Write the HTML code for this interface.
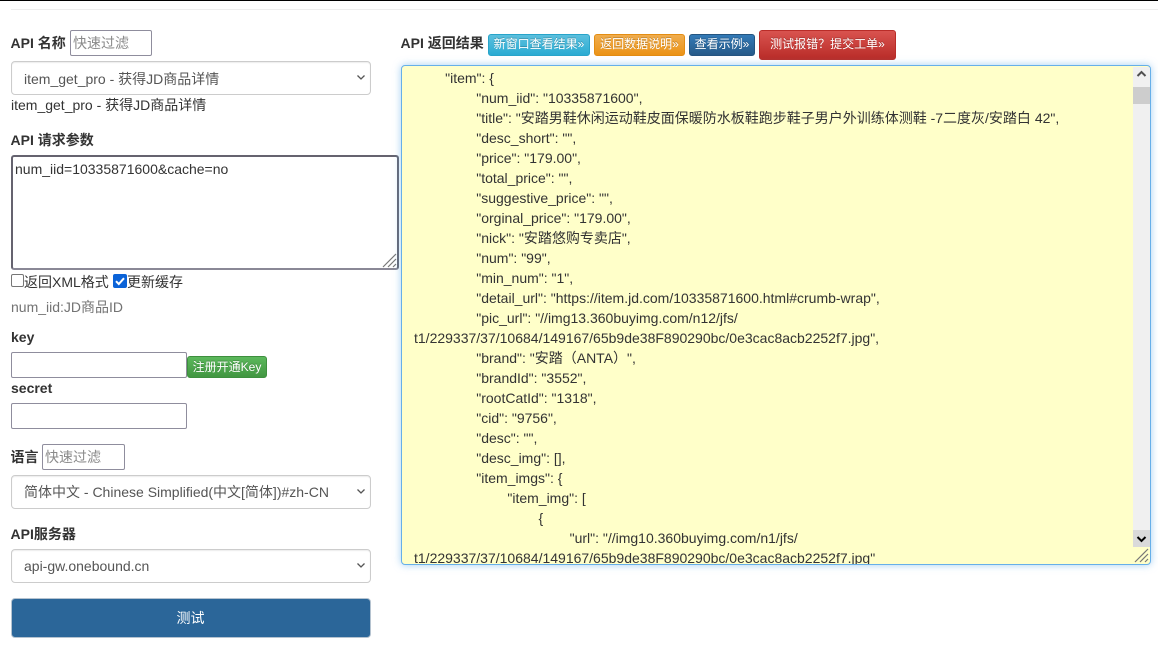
<!DOCTYPE html>
<html><head><meta charset="utf-8">
<style>
html,body{margin:0;padding:0;background:#fff;width:1158px;height:649px;overflow:hidden}
body{position:relative;font:14px/20px "Liberation Sans","Noto Sans CJK SC",sans-serif;color:#333}
.a{position:absolute;white-space:nowrap}
b{font-weight:700}
.in{position:absolute;box-sizing:border-box;border:1px solid #8f8d9d;border-radius:2px;background:#fff;color:#8a8a8a;padding-left:2px;line-height:24px}
.sel{position:absolute;left:11px;width:360px;box-sizing:border-box;border:1px solid #ccc;border-radius:4px;background:#fff;color:#555;padding-left:12px;line-height:32px;box-shadow:inset 0 1px 1px rgba(0,0,0,.075)}
.sel svg{position:absolute;right:4px;top:12px}
.btn{position:absolute;box-sizing:border-box;color:#fff;border-radius:3px;font-size:12px;line-height:19px;text-align:center;white-space:nowrap;text-shadow:0 -1px 0 rgba(0,0,0,.2)}
</style></head><body>
<div class="a" style="left:0;top:0;width:1158px;height:1px;background:#000"></div>
<div class="a" style="left:11px;top:9px;width:1147px;height:1px;background:#eee"></div>

<b class="a" style="left:10.5px;top:33px">API 名称</b>
<div class="in" style="left:70px;top:30px;width:82px;height:26px">快速过滤</div>
<div class="sel" style="top:61px;height:34px;line-height:34px">item_get_pro - 获得JD商品详情<svg width="10" height="7" viewBox="0 0 10 7"><path d="M1.5 1.5 5 5l3.5-3.5" fill="none" stroke="#555" stroke-width="1.3"/></svg></div>
<div class="a" style="left:11px;top:95px">item_get_pro - 获得JD商品详情</div>

<b class="a" style="left:10.5px;top:130px">API 请求参数</b>
<div class="a" style="left:11px;top:155px;width:388px;height:115px;box-sizing:border-box;border:2px solid #65636f;border-bottom-color:#8a8896;border-radius:3px;padding:2px 2px;background:#fff">num_iid=10335871600&amp;cache=no
<svg style="position:absolute;right:0;bottom:0" width="15" height="15" viewBox="0 0 15 15"><path d="M1 14 14 1M6 14l8-8M11 14l3-3" stroke="#777" stroke-width="1.2"/></svg></div>

<div class="a" style="left:11px;top:274px;width:13px;height:13px;box-sizing:border-box;border:1px solid #767676;border-radius:2px;background:#fff"></div>
<div class="a" style="left:24px;top:272px">返回XML格式</div>
<div class="a" style="left:113px;top:274px;width:14px;height:14px;border-radius:2px;background:#0b63d8"><svg style="display:block" width="14" height="14" viewBox="0 0 14 14"><path d="M3 7.2 5.8 10 11 4.2" fill="none" stroke="#fff" stroke-width="2"/></svg></div>
<div class="a" style="left:127px;top:272px">更新缓存</div>
<div class="a" style="left:11px;top:297px;color:#737373">num_iid:JD商品ID</div>

<b class="a" style="left:11px;top:327px">key</b>
<div class="in" style="left:11px;top:352px;width:176px;height:26px"></div>
<div class="btn" style="left:187px;top:356px;width:80px;height:22px;line-height:20px;background:linear-gradient(#5cb85c,#419641);border:1px solid #3e8f3e">注册开通Key</div>
<b class="a" style="left:11px;top:378px">secret</b>
<div class="in" style="left:11px;top:403px;width:176px;height:26px"></div>

<b class="a" style="left:10.5px;top:447px">语言</b>
<div class="in" style="left:42px;top:444px;width:83px;height:26px">快速过滤</div>
<div class="sel" style="top:475px;height:34px">简体中文 - Chinese Simplified(中文[简体])#zh-CN<svg width="10" height="7" viewBox="0 0 10 7"><path d="M1.5 1.5 5 5l3.5-3.5" fill="none" stroke="#555" stroke-width="1.3"/></svg></div>
<b class="a" style="left:10.5px;top:524px">API服务器</b>
<div class="sel" style="top:549px;height:34px">api-gw.onebound.cn<svg width="10" height="7" viewBox="0 0 10 7"><path d="M1.5 1.5 5 5l3.5-3.5" fill="none" stroke="#555" stroke-width="1.3"/></svg></div>
<div class="a" style="left:11px;top:598px;width:360px;height:40px;box-sizing:border-box;background:#2b6699;border:1px solid #b5c3d0;border-radius:4px;color:#fff;text-align:center;line-height:38px;text-indent:-1px">测试</div>

<b class="a" style="left:400.5px;top:33px">API 返回结果</b>
<div class="btn" style="left:488px;top:34px;width:102px;height:22px;background:linear-gradient(#5bc0de,#2aabd2);border:1px solid #28a4c9">新窗口查看结果»</div>
<div class="btn" style="left:594px;top:34px;width:91px;height:22px;background:linear-gradient(#f0ad4e,#eb9316);border:1px solid #e38d13">返回数据说明»</div>
<div class="btn" style="left:689px;top:34px;width:66px;height:22px;background:linear-gradient(#337ab7,#265a88);border:1px solid #245580">查看示例»</div>
<div class="btn" style="left:759px;top:30px;width:137px;height:30px;line-height:27px;background:linear-gradient(#d9534f,#b92c28);border:1px solid #b92c28">测试报错？提交工单»</div>

<div class="a" style="left:401px;top:65px;width:750px;height:500px;box-sizing:border-box;border:1px solid #66afe9;border-radius:4px;background:#ffffc9;box-shadow:0 0 8px rgba(102,175,233,.6);overflow:hidden">
<div style="position:absolute;left:12px;top:2px;width:718px;white-space:pre-wrap;tab-size:8;word-break:normal;overflow-wrap:break-word">	"item": {
		"num_iid": "10335871600",
		"title": "安踏男鞋休闲运动鞋皮面保暖防水板鞋跑步鞋子男户外训练体测鞋 -7二度灰/安踏白 42",
		"desc_short": "",
		"price": "179.00",
		"total_price": "",
		"suggestive_price": "",
		"orginal_price": "179.00",
		"nick": "安踏悠购专卖店",
		"num": "99",
		"min_num": "1",
		"detail_url": "https://item.jd.com/10335871600.html#crumb-wrap",
		"pic_url": "//img13.360buyimg.com/n12/jfs/
t1/229337/37/10684/149167/65b9de38F890290bc/0e3cac8acb2252f7.jpg",
		"brand": "安踏（ANTA）",
		"brandId": "3552",
		"rootCatId": "1318",
		"cid": "9756",
		"desc": "",
		"desc_img": [],
		"item_imgs": {
			"item_img": [
				{
					"url": "//img10.360buyimg.com/n1/jfs/
t1/229337/37/10684/149167/65b9de38F890290bc/0e3cac8acb2252f7.jpg"</div>
<div style="position:absolute;right:0;top:1px;width:17px;height:480px;background:#f0f0f0">
<div style="position:absolute;left:0;top:20px;width:17px;height:17px;background:#cdcdcd"></div>
<svg style="position:absolute;left:0;top:0" width="17" height="17" viewBox="0 0 17 17"><path d="M4.5 9 8.5 5l4 4" fill="none" stroke="#505050" stroke-width="2"/></svg>
<div style="position:absolute;left:0;bottom:0;width:17px;height:17px;background:#dadada"><svg style="display:block" width="17" height="17" viewBox="0 0 17 17"><path d="M4.5 7 8.5 11l4-4" fill="none" stroke="#000" stroke-width="2"/></svg></div>
</div>
<svg style="position:absolute;right:1px;bottom:1px" width="15" height="15" viewBox="0 0 15 15"><path d="M1 14 14 1M6 14l8-8M11 14l3-3" stroke="#777" stroke-width="1.2"/></svg>
</div>
</body></html>
